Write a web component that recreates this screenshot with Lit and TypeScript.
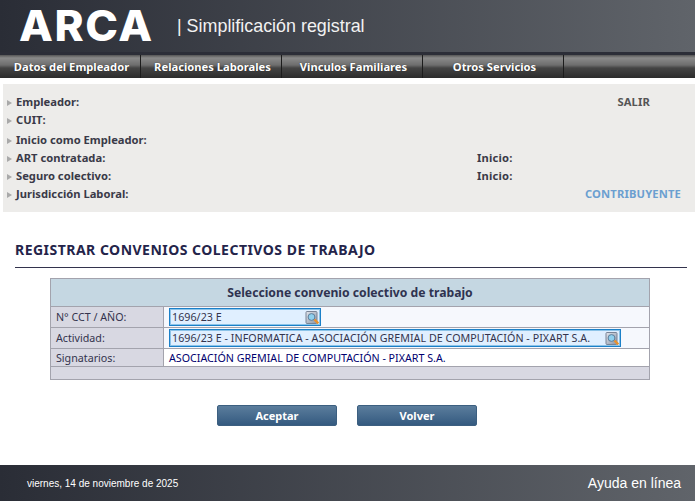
import { LitElement, html, css } from "lit";
import { customElement } from "lit/decorators.js";

const lens = html`<svg class="lens" width="15" height="14" viewBox="0 0 15 14"><defs><linearGradient id="g" x1="0" y1="0" x2="1" y2="1"><stop offset="0" stop-color="#e2e5ec"/><stop offset="1" stop-color="#8a94a6"/></linearGradient></defs><rect x="1" y="0.5" width="11" height="12" rx="1" fill="url(#g)" stroke="#7a8496"/><circle cx="6.5" cy="6" r="3.4" fill="#8fd0ee" stroke="#5f7d99"/><path d="M9.5 8.5l3.8 3.8" stroke="#e8902c" stroke-width="2.4"/></svg>`;

@customElement("app-root")
export class AppRoot extends LitElement {
  static styles = css`
    :host { display: block; width: 695px; height: 501px; background: #fff; font-family: "Noto Sans", "DejaVu Sans", sans-serif; overflow: hidden; }
    .page { display: flex; flex-direction: column; height: 501px; }
    .top { height: 52px; background: linear-gradient(90deg, #2a2d36, #60646a); display: flex; align-items: center; padding-left: 19px; border-bottom: 3px solid #2c2e38; }
    .logo { font-family: Inter, sans-serif; font-weight: 800; font-size: 42px; line-height: 52px; color: #fff; letter-spacing: 1.5px; width: 158px; transform: scaleX(1.05); transform-origin: left center; }
    .sub { font-family: "Liberation Sans", sans-serif; font-size: 17.9px; color: #f2f2f2; }
    .nav { height: 23px; display: flex; background: #1c1c1c; }
    .tab { width: 140px; margin-right: 1px; padding-left: 3px; box-sizing: border-box; flex: none; background: linear-gradient(180deg, #555 0, #8a8a8a 3px, #6e6e6e 10px, #444 13px, #2c2c2c 100%); color: #fff; font-size: 11.2px; font-weight: 700; display: flex; align-items: center; justify-content: center; text-shadow: 0 0 1px #222; }
    .tab.last { flex: 1; margin: 0; }
    .info { margin: 6px 0 0 3px; height: 128px; box-sizing: border-box; padding-top: 9px; background: #edecea; color: #3a3a48; font-size: 11.2px; font-weight: 700; }
    .row { height: 18px; box-sizing: border-box; padding-bottom: 2px; display: grid; grid-template-columns: 474px 1fr; align-items: center; }
    .row.gap { margin-top: 2px; }
    .lbl { display: flex; align-items: center; gap: 4px; padding-left: 4px; }
    .tri { width: 0; height: 0; margin-top: 3px; border-left: 5px solid #a9a9a9; border-top: 3.5px solid transparent; border-bottom: 3.5px solid transparent; }
    .end { text-align: right; letter-spacing: 0.15px; }
    .ini { letter-spacing: 0.2px; }
    .salir { padding-right: 45px; color: #555; }
    .contrib { padding-right: 14px; color: #6b9fd0; }
    .title { margin: 29px 8px 0 15px; height: 27px; box-sizing: border-box; border-bottom: 1px solid #33334d; font-size: 14px; font-weight: 700; color: #24244a; letter-spacing: 0.48px; line-height: 17px; }
    .tbl { margin: 10px 45px 0 50px; border: 1px solid #a3a3ad; background: #f6f8fd; color: #33334d; font-size: 10.7px; }
    .head { height: 27px; background: #c5d7e2; border-bottom: 1px solid #a3a3ad; display: flex; align-items: center; justify-content: center; font-size: 12.2px; font-weight: 700; color: #2f3350; }
    .tr { display: grid; grid-template-columns: 113px 1fr; height: 21px; border-bottom: 1px solid #a3a3ad; align-items: stretch; box-sizing: border-box; }
    .tr.sig { height: 18px; background: #fff; }
    .th { background: #d8d8e2; border-right: 1px solid #a3a3ad; display: flex; align-items: center; padding-left: 5px; }
    .td { display: flex; align-items: center; padding-left: 5px; color: #00006e; }
    .inp { height: 18px; box-sizing: border-box; border: 1px solid #1b80c8; outline: 1px solid #8cc3e8; outline-offset: -2px; background: #e0efff; color: #33334d; letter-spacing: 0.04px; display: flex; align-items: center; justify-content: space-between; padding: 0 0 0 2px; }
    .inp.s { width: 152px; }
    .inp.l { width: 452px; }
    .lens { flex: none; align-self: flex-end; }
    .foot { height: 12px; background: #d8d8e2; }
    .btns { display: flex; justify-content: center; gap: 20px; margin: 25px 0 0 -1px; }
    .btn { width: 120px; height: 21px; box-sizing: border-box; border: 1px solid #3c5f80; border-radius: 2px; background: linear-gradient(180deg, #5b7d9c, #345a80); color: #fff; font-size: 11px; font-weight: 700; display: flex; align-items: center; justify-content: center; }
    .bottom { margin-top: auto; height: 36px; background: linear-gradient(90deg, #2a2d36, #60646a); display: flex; align-items: center; justify-content: space-between; padding: 0 14px 0 27px; color: #fff; font-family: "Liberation Sans", sans-serif; }
    .date { font-size: 10px; }
    .help { font-size: 14px; }
  `;
  render() {
    const L = (t: string) => html`<div class="lbl"><span class="tri"></span><span>${t}</span></div>`;
    return html`<div class="page">
      <header class="top"><div class="logo">ARCA</div><div class="sub">| Simplificación registral</div></header>
      <nav class="nav">
        <div class="tab">Datos del Empleador</div><div class="tab">Relaciones Laborales</div><div class="tab">Vinculos Familiares</div><div class="tab">Otros Servicios</div><div class="tab last"></div>
      </nav>
      <section class="info">
        <div class="row">${L("Empleador:")}<div class="end salir">SALIR</div></div>
        <div class="row">${L("CUIT:")}<div></div></div>
        <div class="row gap">${L("Inicio como Empleador:")}<div></div></div>
        <div class="row">${L("ART contratada:")}<div class="ini">Inicio:</div></div>
        <div class="row">${L("Seguro colectivo:")}<div class="ini">Inicio:</div></div>
        <div class="row">${L("Jurisdicción Laboral:")}<div class="end contrib">CONTRIBUYENTE</div></div>
      </section>
      <h1 class="title">REGISTRAR CONVENIOS COLECTIVOS DE TRABAJO</h1>
      <section class="tbl">
        <div class="head">Seleccione convenio colectivo de trabajo</div>
        <div class="tr"><div class="th">N° CCT / AÑO:</div><div class="td"><div class="inp s"><span>1696/23 E</span>${lens}</div></div></div>
        <div class="tr"><div class="th">Actividad:</div><div class="td"><div class="inp l"><span>1696/23 E - INFORMATICA - ASOCIACIÓN GREMIAL DE COMPUTACIÓN - PIXART S.A.</span>${lens}</div></div></div>
        <div class="tr sig"><div class="th">Signatarios:</div><div class="td">ASOCIACIÓN GREMIAL DE COMPUTACIÓN - PIXART S.A.</div></div>
        <div class="foot"></div>
      </section>
      <div class="btns"><div class="btn">Aceptar</div><div class="btn">Volver</div></div>
      <footer class="bottom"><span class="date">viernes, 14 de noviembre de 2025</span><span class="help">Ayuda en línea</span></footer>
    </div>`;
  }
}
